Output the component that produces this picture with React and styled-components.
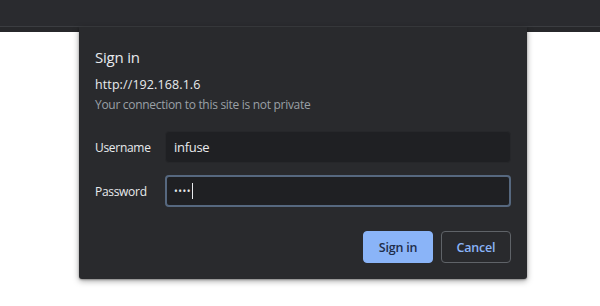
import React from "react";
import styled, { createGlobalStyle } from "styled-components";

const Global = createGlobalStyle`
  html, body { margin: 0; padding: 0; background: #ffffff; }
  body { width: 600px; height: 306px; overflow: hidden; font-family: "Open Sans", "Noto Sans", sans-serif; }
`;

const Screen = styled.div`
  position: relative;
  width: 600px;
  height: 306px;
  background: #ffffff;
`;

const Toolbar = styled.div`
  height: 26px;
  background: #2a2b2f;
  border-bottom: 1px solid #3b3d41;
`;

const PageEdge = styled.div`
  height: 5px;
  background: #27282b;
`;

const Dialog = styled.div`
  position: absolute;
  left: 79px;
  top: 27px;
  width: 448px;
  box-sizing: border-box;
  padding: 20px 16px 16px;
  background: #292a2d;
  border-radius: 0 0 3px 3px;
  box-shadow: 0 2px 6px rgba(0, 0, 0, 0.35), 0 1px 2px rgba(0, 0, 0, 0.3);
  color: #e8eaed;
  letter-spacing: -0.3px;
`;

const Title = styled.h1`
  margin: 0 0 8px;
  font-size: 15px;
  line-height: 20px;
  font-weight: 400;
  color: #e8eaed;
  letter-spacing: -0.2px;
`;

const InfoLine = styled.div`
  font-size: ${(p) => (p.$muted ? 12 : 12.5)}px;
  line-height: 20px;
  letter-spacing: ${(p) => (p.$muted ? -0.3 : 0.1)}px;
  color: ${(p) => (p.$muted ? "#9aa0a6" : "#e8eaed")};
`;

const Form = styled.div`
  display: grid;
  grid-template-columns: 70px 1fr;
  row-gap: 12px;
  align-items: center;
  margin-top: 16px;
`;

const Label = styled.div`
  font-size: 12px;
  color: #e8eaed;
`;

const Field = styled.div`
  height: 32px;
  box-sizing: border-box;
  display: flex;
  align-items: center;
  padding: 0 ${(p) => (p.$focused ? 7 : 8)}px;
  background: #1f2023;
  border-radius: 4px;
  border: ${(p) => (p.$focused ? "2px solid #56687f" : "1px solid #26272a")};
  font-size: 13px;
  color: #e8eaed;
`;

const Dots = styled.span`
  font-size: 10px;
  letter-spacing: 0.5px;
  color: #e8eaed;
`;

const Caret = styled.span`
  display: inline-block;
  width: 1px;
  height: 16px;
  background: #e8eaed;
  margin-left: 1px;
`;

const Actions = styled.div`
  display: flex;
  justify-content: flex-end;
  gap: 8px;
  margin-top: 24px;
`;

const Button = styled.button`
  width: 70px;
  height: 32px;
  box-sizing: border-box;
  border-radius: 4px;
  font-family: inherit;
  font-size: 12.5px;
  font-weight: 600;
  letter-spacing: -0.2px;
  cursor: pointer;
  background: ${(p) => (p.$primary ? "#8ab4f8" : "transparent")};
  color: ${(p) => (p.$primary ? "#1e2d4a" : "#8ab4f8")};
  border: 1px solid ${(p) => (p.$primary ? "#8ab4f8" : "#5f6368")};
`;

export default function App() {
  return (
    <Screen>
      <Global />
      <Toolbar />
      <PageEdge />
      <Dialog>
        <Title>Sign in</Title>
        <InfoLine>http://192.168.1.6</InfoLine>
        <InfoLine $muted>Your connection to this site is not private</InfoLine>
        <Form>
          <Label>Username</Label>
          <Field>infuse</Field>
          <Label>Password</Label>
          <Field $focused>
            <Dots>••••</Dots>
            <Caret />
          </Field>
        </Form>
        <Actions>
          <Button $primary>Sign in</Button>
          <Button>Cancel</Button>
        </Actions>
      </Dialog>
    </Screen>
  );
}
